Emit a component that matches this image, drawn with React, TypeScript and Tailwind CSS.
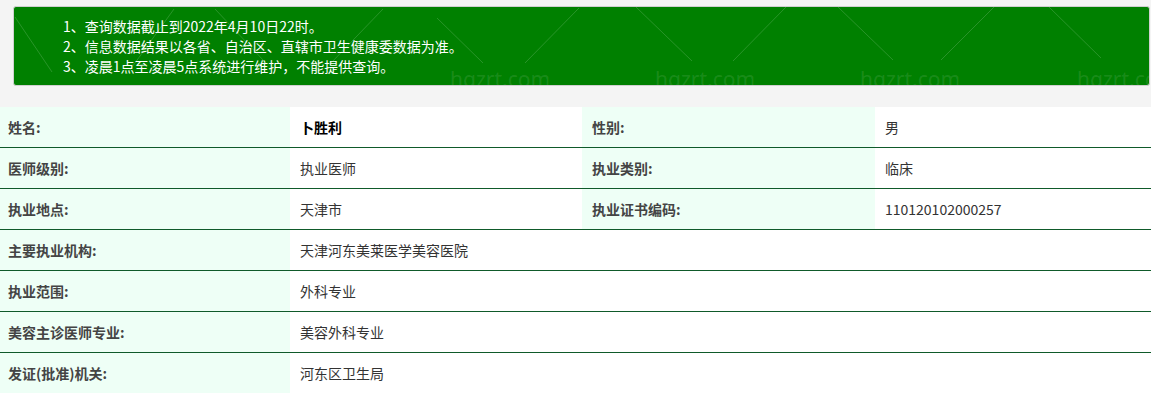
import React from "react";

const font = { fontFamily: '"Noto Sans CJK SC", "Noto Sans", sans-serif' };

const lines: [number, number, number, number][] = [
  [1, 10, 38, 65],
  [201, 2, 250, 54],
  [423, 11, 469, 56],
  [622, 0, 678, 54],
  [824, 0, 879, 53],
  [1035, 0, 1087, 51],
  [113, 67, 160, 2],
  [316, 57, 369, 2],
  [511, 56, 565, 1],
  [719, 54, 772, 0],
  [927, 53, 980, 0],
];
const texts = [436, 641, 846, 1063];

function Watermark() {
  return (
    <svg className="absolute inset-0 pointer-events-none" width="1138" height="80" viewBox="0 0 1138 80">
      {lines.map(([x1, y1, x2, y2], i) => (
        <line key={i} x1={x1} y1={y1} x2={x2} y2={y2} stroke="rgba(255,255,255,0.16)" strokeWidth="1" />
      ))}
      {texts.map((t) => (
        <text key={t} x={t} y={80} fill="rgba(255,255,255,0.11)" fontSize="21" fontFamily='"Noto Sans", "Open Sans", sans-serif'>
          hgzrt.com
        </text>
      ))}
    </svg>
  );
}

const labelCls = "bg-[#eefff6] flex items-center font-bold text-[#444] text-[14px]";
const valueCls = "bg-white flex items-center text-[#333] text-[14px]";

export default function App() {
  const rows4: [string, string][] = [
    ["主要执业机构:", "天津河东美莱医学美容医院"],
    ["执业范围:", "外科专业"],
    ["美容主诊医师专业:", "美容外科专业"],
    ["发证(批准)机关:", "河东区卫生局"],
  ];
  return (
    <div className="w-[1151px] bg-[#f4f4f4] pt-[6px]" style={font}>
      <div className="relative ml-[13px] mr-[1px] h-[80px] bg-[#008000] border border-[#d0d0d0] rounded-[3px] overflow-hidden">
        <Watermark />
        <div className="relative pl-[49px] pt-[9px] text-white text-[14px] leading-[20px]">
          <div>1、查询数据截止到2022年4月10日22时。</div>
          <div>2、信息数据结果以各省、自治区、直辖市卫生健康委数据为准。</div>
          <div>3、凌晨1点至凌晨5点系统进行维护，不能提供查询。</div>
        </div>
      </div>
      <div className="mt-[21px]">
        <div className="grid grid-cols-[290px_292px_293px_1fr] h-[41px] border-b border-[#0f5a2a]">
          <div className={`${labelCls} pl-[8px]`}>姓名:</div>
          <div className={`${valueCls} pl-[10px] font-bold text-black`}>卜胜利</div>
          <div className={`${labelCls} pl-[10px]`}>性别:</div>
          <div className={`${valueCls} pl-[10px]`}>男</div>
        </div>
        <div className="grid grid-cols-[290px_292px_293px_1fr] h-[41px] border-b border-[#0f5a2a]">
          <div className={`${labelCls} pl-[8px]`}>医师级别:</div>
          <div className={`${valueCls} pl-[10px]`}>执业医师</div>
          <div className={`${labelCls} pl-[10px]`}>执业类别:</div>
          <div className={`${valueCls} pl-[10px]`}>临床</div>
        </div>
        <div className="grid grid-cols-[290px_292px_293px_1fr] h-[41px] border-b border-[#0f5a2a]">
          <div className={`${labelCls} pl-[8px]`}>执业地点:</div>
          <div className={`${valueCls} pl-[10px]`}>天津市</div>
          <div className={`${labelCls} pl-[10px]`}>执业证书编码:</div>
          <div className={`${valueCls} pl-[10px]`}>110120102000257</div>
        </div>
        {rows4.map(([l, v]) => (
          <div key={l} className="grid grid-cols-[290px_1fr] h-[41px] border-b border-[#0f5a2a]">
            <div className={`${labelCls} pl-[8px]`}>{l}</div>
            <div className={`${valueCls} pl-[10px]`}>{v}</div>
          </div>
        ))}
      </div>
    </div>
  );
}
